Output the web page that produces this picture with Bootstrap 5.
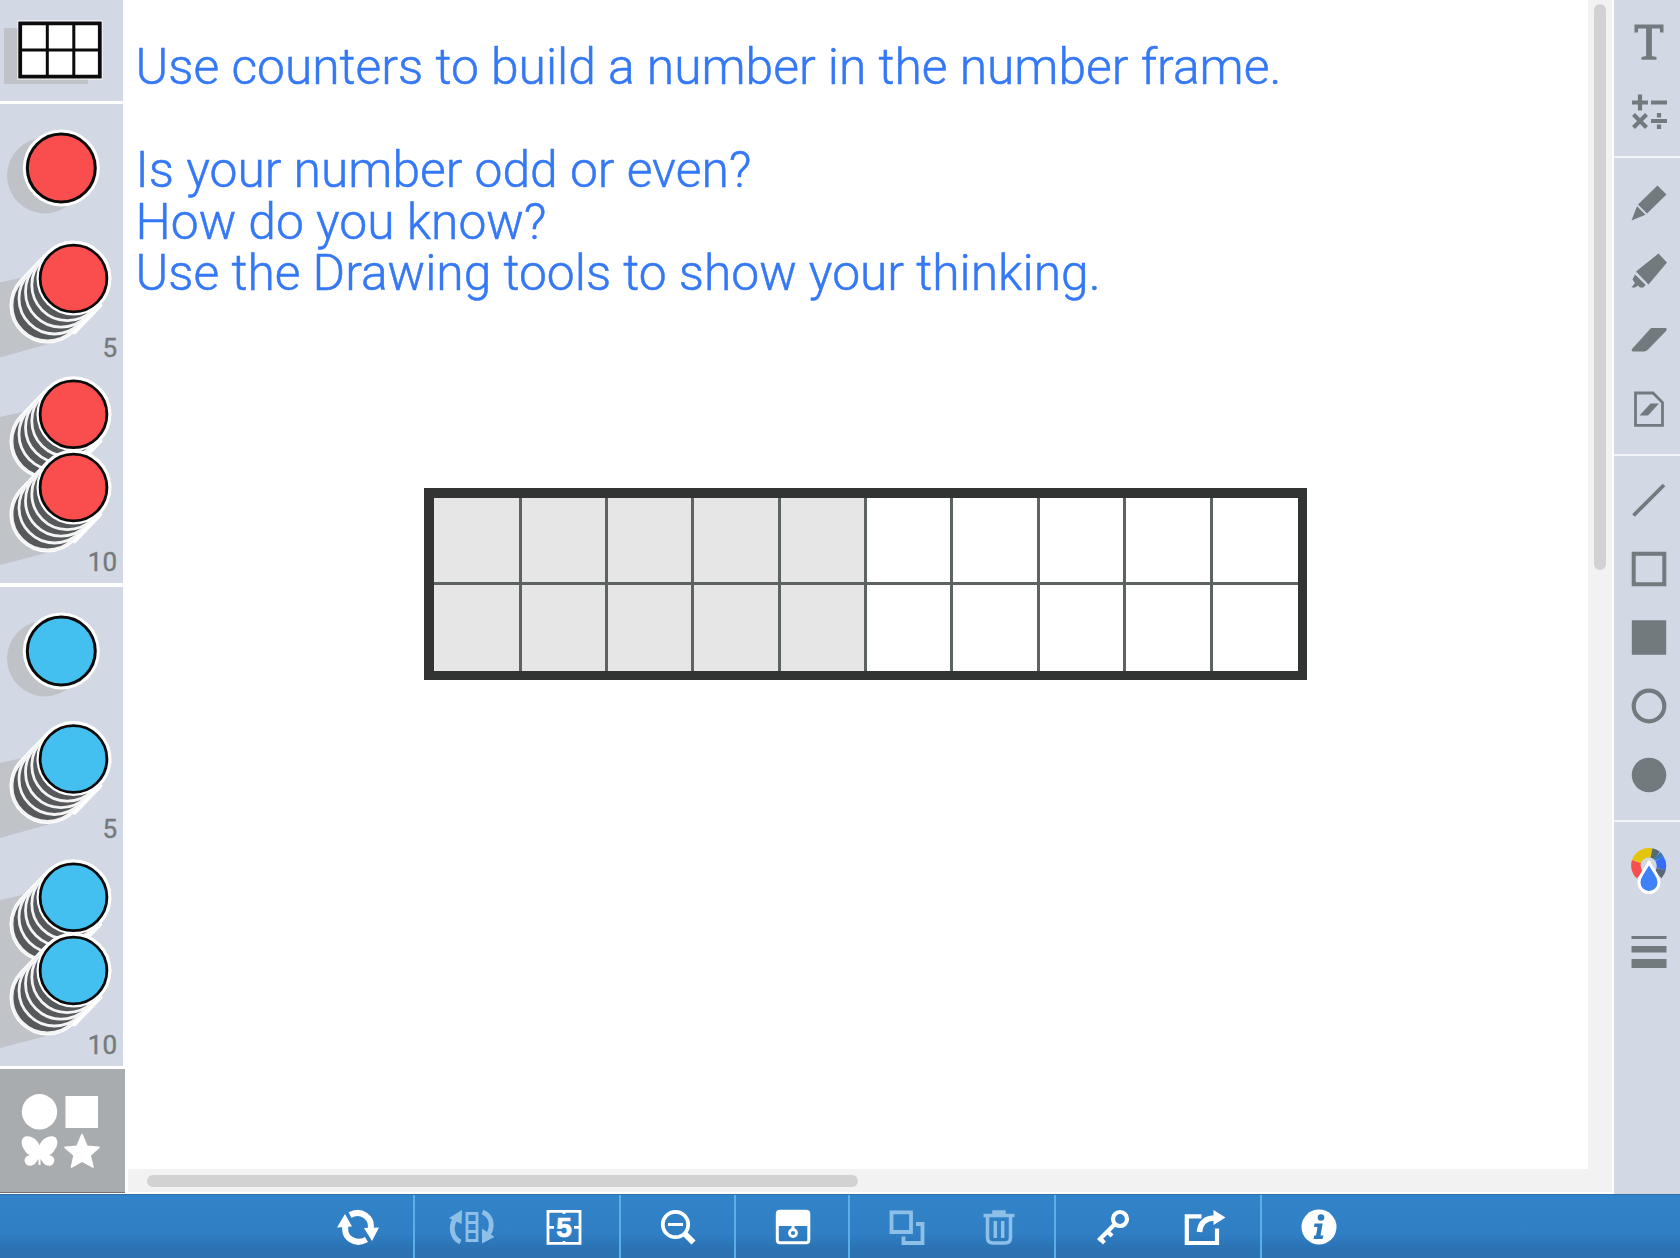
<!DOCTYPE html>
<html lang="en">
<head>
<meta charset="utf-8">
<title>Number Frames</title>
<link href="https://cdn.jsdelivr.net/npm/bootstrap@5.3.0/dist/css/bootstrap.min.css" rel="stylesheet">
<style>
  body { font-family: Roboto, "Liberation Sans", sans-serif; background: #fff; }
  svg { display: block; flex: none; }
  .app-shell { width: 1680px; height: 1258px; }
  .work-area { height: 1194px; }
  .supply { width: 128px; }
  .supply-panel { width: 123px; background: #d2d9e4; margin-bottom: 3.5px; }
  .panel-frame { height: 100.5px; }
  .panel-discs { height: 479px; }
  .disc-red { color: #fa4d4d; }
  .disc-blue { color: #43bff0; }
  .shapes-btn { width: 125px; height: 123.5px; background: #a9acaf; border-bottom: 1px solid #77706f; }
  .board { background: #fff; }
  .prompt { font-weight: 300; font-size: 49.75px; line-height: 51.6px; color: #3478f6; -webkit-text-stroke: .5px #3478f6; padding: 42px 0 0 7.6px; white-space: pre; height: 488px; }
  .ten-frame { margin-left: 296px; width: 883px; height: 192px; padding: 9.5px; background: #323434; }
  .ten-grid { display: grid; grid-template-columns: 85px repeat(8, 83.4px) 1fr; grid-template-rows: 84.6px 1fr; gap: 3px; background: #5d6262; height: 100%; }
  .ten-grid > div { background: #fff; }
  .ten-grid > div.tinted { background: #e6e6e6; }
  .track { background: #f2f2f2; }
  .track-y { width: 23.5px; padding: 4px 6px; }
  .track-y > div { height: 566px; width: 12px; background: #d2d2d2; border-radius: 6px; }
  .track-x { height: 23px; padding: 5.5px 19px; }
  .track-x > div { width: 711px; height: 12px; background: #d2d2d2; border-radius: 6px; }
  .track-gap { height: 2px; }
  .tools { width: 66px; margin-left: 2.5px; background: #d2d9e4; color: #727a7e; }
  .tool-set { border-bottom: 2.5px solid #f2f4f8; padding-left: 3px; }
  .tool-set > div { height: 68.7px; }
  .bar { height: 64px; padding-left: 300.5px; background: linear-gradient(#3283c9, #307fc5 60%, #2b72b3 85%, #2b72b3); border-top: 1px solid #2c6fa9; color: #fff; }
  .bar-set { padding: 0 9.6px 0 11.6px; border-right: 2px solid #5cafe6; }
  .bar-set:last-child { border-right: 0; }
  .bar-set > div { width: 91.4px; padding-top: 1px; }
  .dim { color: #8dbfe7; }
</style>
<script src="https://cdn.jsdelivr.net/npm/bootstrap@5.3.0/dist/js/bootstrap.bundle.min.js"></script>
</head>
<body>
<svg width="0" height="0" class="position-absolute">
  <defs>
    <g id="disc-pile">
      <path d="M-26 27L0 0" stroke="#fff" stroke-width="76" stroke-linecap="round"/>
      <g fill="#56595b" stroke="#f4f4f4" stroke-width="2.800">
        <circle cx="-26" cy="27" r="35.500"/><circle cx="-19" cy="20" r="35.500"/><circle cx="-12.500" cy="13.200" r="35.500"/><circle cx="-6.200" cy="6.600" r="35.500"/>
      </g>
      <path d="M26.900 26.900L0.900 53.900" stroke="#fff" stroke-width="4" stroke-linecap="round"/>
      <circle r="37" fill="#fff"/>
      <circle r="33.400" fill="currentColor" stroke="#0b0b0b" stroke-width="2.800"/>
    </g>
    <g id="disc-set">
      <circle cx="45" cy="71.500" r="38" fill="#bfc3c8"/>
      <circle cx="61.300" cy="64" r="38.500" fill="#fff"/>
      <circle cx="61.300" cy="64" r="34" fill="currentColor" stroke="#0b0b0b" stroke-width="3"/>
      <path d="M0 313L40 304L50 448L0 461Z" fill="#c0c3c8"/>
      <use href="#disc-pile" x="73.500" y="310.300"/>
      <use href="#disc-pile" x="73.500" y="383.500"/>
      <text x="117" y="466.500" class="pile-count">10</text>
    </g>
    <g id="five-set">
      <path d="M0 4L40 -5L50 65L0 79Z" fill="#c0c3c8"/>
      <use href="#disc-pile" x="73.500" y="0"/>
      <text x="117" y="78.800" class="pile-count">5</text>
    </g>
  </defs>
  <style>.pile-count { font: 400 26px Roboto, sans-serif; fill: #757a7c; stroke: #757a7c; stroke-width: .4px; text-anchor: end; }</style>
</svg>

<div class="app-shell d-flex flex-column overflow-hidden">
  <div class="work-area d-flex">
    <aside class="supply d-flex flex-column">
      <div class="supply-panel panel-frame">
        <svg width="123" height="100">
          <path d="M4 28H88V84H4Z" fill="#bfc3c8"/>
          <path d="M17.500 20.500H102.500V79.500H17.500Z" fill="#fff"/>
          <path d="M20.200 23.300H99.800V76.700H20.200Z" fill="#fff" stroke="#0b0b0b" stroke-width="3.800"/>
          <path d="M47.300 23V77M73.800 23V77M20 50H100" stroke="#0b0b0b" stroke-width="3"/>
        </svg>
      </div>
      <div class="supply-panel panel-discs disc-red"><svg width="123" height="479"><use href="#disc-set"/><use href="#five-set" y="174.500"/></svg></div>
      <div class="supply-panel panel-discs disc-blue"><svg width="123" height="479"><use href="#disc-set"/><use href="#five-set" y="172"/></svg></div>
      <div class="shapes-btn">
        <svg width="125" height="122" fill="#fff">
          <circle cx="39.500" cy="42.800" r="17.700"/>
          <path d="M65.500 27H98V59H65.500Z"/>
          <path d="M39.500 76.500C41 71.500 47 66.500 53.500 67.500C59 69 58 77 54.500 81C53 84.500 51 85 49 86C54 87 56 91 53 95C51 98 45 97.500 42 92L40.500 90V96H38.500V90L37 92C34 97.500 28 98 26 95C23 91 25 87 30 86C28 85 26 84.500 24.500 81C21 77 20 69 25.500 67.500C32 66.500 38 71.500 39.500 76.500Z"/>
          <path d="M82 65.500L87 77.200L99 78.300L90 86.300L93 98L82 92L71.500 98L74.200 86.300L65 78.300L77 77.200Z" stroke="#fff" stroke-width="1.600" stroke-linejoin="round"/>
        </svg>
      </div>
    </aside>

    <main class="flex-grow-1 d-flex flex-column">
      <div class="board flex-grow-1 d-flex">
        <div class="flex-grow-1">
          <div class="prompt">Use counters to build a number in the number frame.

Is your number odd or even?
How do you know?
Use the Drawing tools to show your thinking.</div>
          <div class="ten-frame">
            <div class="ten-grid">
              <div class="tinted"></div><div class="tinted"></div><div class="tinted"></div><div class="tinted"></div><div class="tinted"></div><div></div><div></div><div></div><div></div><div></div>
              <div class="tinted"></div><div class="tinted"></div><div class="tinted"></div><div class="tinted"></div><div class="tinted"></div><div></div><div></div><div></div><div></div><div></div>
            </div>
          </div>
        </div>
        <div class="track track-y"><div></div></div>
      </div>
      <div class="track track-x"><div></div></div>
      <div class="track-gap bg-white"></div>
    </main>

    <aside class="tools">
      <div class="tool-set pt-2">
        <div class="d-flex justify-content-center align-items-center">
          <svg width="36" height="36" viewBox="0 0 36 36" fill="currentColor"><path d="M3.500 0.500H32.500V8.500H29.200L28.700 4.500H20.900V32L25.500 33V35.800H10.500V33L15.100 32V4.500H7.300L6.800 8.500H3.500Z"/></svg>
        </div>
        <div class="d-flex justify-content-center align-items-center">
          <svg width="36" height="36" viewBox="0 -0.500 36 36" fill="none" stroke="currentColor" stroke-width="4.200"><path d="M1 9H17M9 1V17M20 9H36M20 27.500H36M2.500 21L15.500 34M15.500 21L2.500 34"/><path d="M28 19.500V24M28 31V35.500"/></svg>
        </div>
        <div style="height:10.5px"></div>
      </div>
      <div class="tool-set" style="padding-top:10.5px">
        <div class="d-flex justify-content-center align-items-center">
          <svg width="36" height="36" viewBox="0 0 36 36" fill="currentColor"><path d="M26.500 0.500L35.500 9.500L16 28.500L7 19.500ZM6 21.300L14.500 29.800L0.500 35.500Z"/></svg>
        </div>
        <div class="d-flex justify-content-center align-items-center">
          <svg width="36" height="36" viewBox="0 0 36 36" fill="currentColor"><path d="M27.500 0.500L36 9.500L17.500 31.500L5 18.500ZM4 21.500L14.500 31.800L12.500 34.500H9L7 32.500L4 34.500H0.500L4 30L1.500 26.500Z"/></svg>
        </div>
        <div class="d-flex justify-content-center align-items-center">
          <svg width="36" height="36" viewBox="0 0 36 36" fill="currentColor"><path d="M20 6H34Q37 6 35 9L19 25.500Q15.500 29.500 13 29.500H2Q-0.500 29 1.500 26.500Z"/></svg>
        </div>
        <div class="d-flex justify-content-center align-items-center">
          <svg width="36" height="36" viewBox="0 0 36 36" fill="none" stroke="currentColor" stroke-width="2.800"><path d="M4.500 2H22L31.500 11.500V34.300H4.500Z"/><path d="M19.500 12.500H28L17 24.500H8.500Z" fill="currentColor" stroke="none"/></svg>
        </div>
        <div style="height:10.5px"></div>
      </div>
      <div class="tool-set" style="padding-top:10px">
        <div class="d-flex justify-content-center align-items-center">
          <svg width="36" height="36" viewBox="0 0 36 36" stroke="currentColor" stroke-width="3.800"><path d="M2.500 33.500L33 3"/></svg>
        </div>
        <div class="d-flex justify-content-center align-items-center">
          <svg width="36" height="36" viewBox="0 0 36 36" fill="none" stroke="currentColor" stroke-width="4"><path d="M2.700 2.700H33.300V33.300H2.700Z"/></svg>
        </div>
        <div class="d-flex justify-content-center align-items-center">
          <svg width="36" height="36" viewBox="0 -0.500 36 36" fill="currentColor"><path d="M0.800 0.800H35.200V35.200H0.800Z"/></svg>
        </div>
        <div class="d-flex justify-content-center align-items-center">
          <svg width="36" height="36" viewBox="0 0 36 36" fill="none" stroke="currentColor" stroke-width="4.200"><circle cx="18" cy="18" r="15.300"/></svg>
        </div>
        <div class="d-flex justify-content-center align-items-center">
          <svg width="36" height="36" viewBox="0 0 36 36" fill="currentColor"><circle cx="18" cy="18" r="17.300"/></svg>
        </div>
        <div style="height:10.5px"></div>
      </div>
      <div class="tool-set border-0" style="padding-top:15px">
        <div class="d-flex justify-content-center align-items-center">
          <svg width="36" height="48" viewBox="0 0 36 48">
            <g fill="none" stroke-width="9.500">
              <path d="M9 28A13 13 0 0 1 5.500 14.500" stroke="#fa4d4d"/>
              <path d="M5.500 14.500A13 13 0 0 1 20.500 6" stroke="#e3c60c"/>
              <path d="M20.500 6A13 13 0 0 1 26 8.500" stroke="#566a70"/>
              <path d="M26 8.500A13 13 0 0 1 28.300 11.500" stroke="#3979b8"/>
              <path d="M28.300 11.500A13 13 0 0 1 30 22" stroke="#376cf5"/>
              <path d="M30.200 22A13 13 0 0 1 27 28" stroke="#59677b"/>
            </g>
            <path d="M18 15C21 23 28 28 28 35.500A10 10 0 0 1 8 35.500C8 28 15 23 18 15Z" fill="#3f82f8" stroke="#fff" stroke-width="3" stroke-linejoin="round"/>
          </svg>
        </div>
        <div class="d-flex justify-content-center align-items-end pb-1">
          <svg width="36" height="36" viewBox="0 0 36 36" fill="currentColor"><path d="M0.500 2H35.500V5H0.500ZM0.500 12H35.500V18.500H0.500ZM0.500 25H35.500V34H0.500Z"/></svg>
        </div>
      </div>
    </aside>
  </div>

  <nav class="bar d-flex">
    <div class="bar-set d-flex">
      <div class="d-flex justify-content-center align-items-center">
        <svg width="44" height="36" viewBox="0 -0.500 44 36" fill="none" stroke="#fff" stroke-width="6"><path d="M14 5.500C25 -0.500 37 8 34.500 20"/><path d="M30.500 30C20 36 7 29 9.500 16"/><path d="M1 18L9 4.500L16 17ZM43 18L36 31.500L28 18.500Z" fill="#fff" stroke="none"/></svg>
      </div>
    </div>
    <div class="bar-set d-flex dim">
      <div class="d-flex justify-content-center align-items-center">
        <svg width="46" height="36" viewBox="0.500 0 46 36" fill="none" stroke="currentColor" stroke-width="4.800"><path d="M12 33C3 29 1.500 17 7 9"/><path d="M34 3C44 7 45 18 39 27"/><path d="M0.500 9L13.500 1L13 15ZM33.500 19.500V34.500L46 28Z" fill="currentColor" stroke="none"/><path d="M18.500 4.500H28.500V31.500H18.500ZM18.500 13.500H28.500M18.500 22.500H28.500" stroke-width="2.800"/></svg>
      </div>
      <div class="d-flex justify-content-center align-items-center">
        <svg width="36" height="36" viewBox="0 0 36 36" fill="none" stroke="#fff" stroke-width="2.800"><path d="M2 2.300H34V34.300H2ZM18 1V5M18 32V35M2 18.300H8M28 18.300H34"/><text x="18" y="27.800" text-anchor="middle" font-family="Liberation Sans, sans-serif" font-weight="bold" font-size="28" fill="#fff" stroke-width=".7">5</text></svg>
      </div>
    </div>
    <div class="bar-set d-flex">
      <div class="d-flex justify-content-center align-items-center">
        <svg width="36" height="36" viewBox="0 0 36 36" fill="none" stroke="#fff" stroke-width="3.800"><circle cx="15.500" cy="15.500" r="12.700"/><path d="M8 15.500H23" stroke-width="3"/><path d="M25 25L33.500 33.500" stroke-width="5.800"/></svg>
      </div>
    </div>
    <div class="bar-set d-flex">
      <div class="d-flex justify-content-center align-items-center">
        <svg width="36" height="36" viewBox="0 0 36 36" fill="none" stroke="#fff"><path d="M2.300 5Q2.300 2.300 5 2.300H31Q33.800 2.300 33.800 5V31Q33.800 33.700 31 33.700H5Q2.300 33.700 2.300 31Z" stroke-width="3"/><path d="M2 5Q2 2 5 2H31Q34 2 34 5V17H2Z" fill="#fff" stroke="none"/><circle cx="18" cy="24" r="3.500" stroke-width="2.800"/><path d="M18 16V20.500" stroke-width="3"/></svg>
      </div>
    </div>
    <div class="bar-set d-flex dim">
      <div class="d-flex justify-content-center align-items-center">
        <svg width="36" height="36" viewBox="0 -0.500 36 36" fill="none" stroke="currentColor" stroke-width="3.800"><path d="M2.500 2.800H22V22.500H2.500ZM27 14.500H33.500V33.500H14.500V27"/></svg>
      </div>
      <div class="d-flex justify-content-center align-items-center">
        <svg width="36" height="36" viewBox="0 -0.500 36 36" fill="none" stroke="currentColor" stroke-width="3.500"><path d="M2.500 6H33.500M13 5V2.600H23V5M6.500 7V28Q6.500 33.500 12 33.500H24Q29.500 33.500 29.500 28V7M14.300 11.500V28.500M21.700 11.500V28.500"/></svg>
      </div>
    </div>
    <div class="bar-set d-flex">
      <div class="d-flex justify-content-center align-items-center">
        <svg width="36" height="36" viewBox="0 -0.500 36 36" fill="none" stroke="#fff" stroke-width="4.200"><circle cx="25" cy="9.500" r="7"/><path d="M20 14.500L3.500 31M12.500 22L17 26.500M5 29L9.500 33.500"/></svg>
      </div>
      <div class="d-flex justify-content-center align-items-center">
        <svg width="44" height="36" viewBox="0.500 -0.500 44 36" fill="none" stroke="#fff" stroke-width="4.200"><path d="M19 6.800H4.300V33.500H34.500V19"/><path d="M17 22.500C18 12 24 8.500 33 8.500" stroke-width="5.600"/><path d="M31 0.500L43 8L31 15.500Z" fill="#fff" stroke="none"/></svg>
      </div>
    </div>
    <div class="bar-set d-flex">
      <div class="d-flex justify-content-center align-items-center">
        <svg width="36" height="36" viewBox="0 0 36 36"><circle cx="18" cy="18" r="17.500" fill="#fff"/><circle cx="20" cy="8.500" r="3.300" fill="#2e7ac0"/><path d="M13.500 14.500H21.700L19.500 26.500H22.500L21.500 30H12.500L13.200 26.500H15L16.500 18H13Z" fill="#2e7ac0"/></svg>
      </div>
    </div>
  </nav>
</div>
</body>
</html>
